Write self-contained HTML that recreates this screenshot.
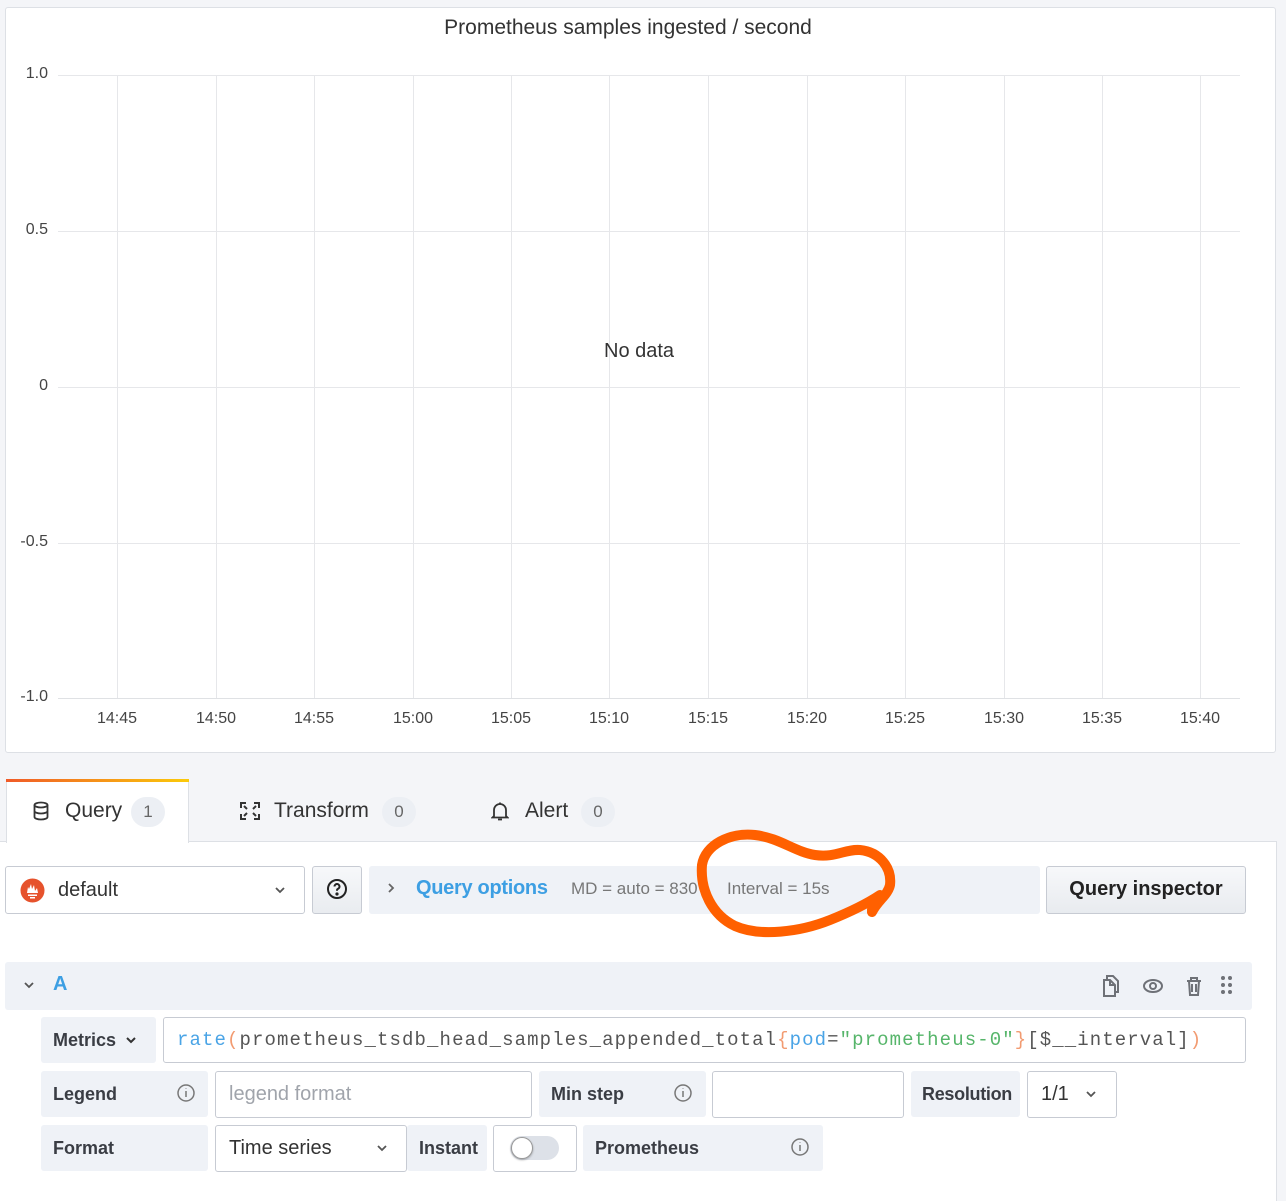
<!DOCTYPE html>
<html><head><meta charset="utf-8"><style>
*{box-sizing:border-box;margin:0;padding:0}
body{width:1286px;height:1192px;background:#f4f5f8;font-family:"Liberation Sans",sans-serif;color:#222;position:relative;overflow:hidden}
.a{position:absolute}
.panel{left:5px;top:7px;width:1271px;height:746px;background:#fff;border:1px solid #dde0e5;border-radius:3px}
.yl{position:absolute;right:1238px;font-size:16px;color:#444;width:60px;text-align:right}
.xl{position:absolute;top:710px;font-size:16px;color:#444;width:60px;text-align:center}
.hg{position:absolute;left:58px;width:1182px;height:1px;background:#e6e7ea}
.vg{position:absolute;top:75px;height:623px;width:1px;background:#e6e7ea}
.lbl{position:absolute;background:#eff2f7;border-radius:3px;font-size:18px;font-weight:bold;color:#3a3d44;padding-left:12px;display:flex;align-items:center}
.inp{position:absolute;background:#fff;border:1px solid #c7cbd3;border-radius:3px;display:flex;align-items:center;padding-left:13px;font-size:20px;color:#333}
.badge{position:absolute;width:34px;height:30px;border-radius:15px;background:#eceff4;color:#666;font-size:17px;text-align:center;line-height:30px}
.tab{position:absolute;font-size:21px;color:#333}
.chev{position:absolute}
</style></head><body>
<div class="a panel"></div>
<div class="a" style="left:0;width:1256px;top:16px;text-align:center;font-size:21px;color:#333">Prometheus samples ingested / second</div>
<div class="hg" style="top:75px"></div><div class="hg" style="top:231px"></div><div class="hg" style="top:387px"></div><div class="hg" style="top:543px"></div><div class="hg" style="top:698px;background:#dfe1e4"></div>
<div class="vg" style="left:117px"></div><div class="vg" style="left:216px"></div><div class="vg" style="left:314px"></div><div class="vg" style="left:413px"></div><div class="vg" style="left:511px"></div><div class="vg" style="left:609px"></div><div class="vg" style="left:708px"></div><div class="vg" style="left:807px"></div><div class="vg" style="left:905px"></div><div class="vg" style="left:1004px"></div><div class="vg" style="left:1102px"></div><div class="vg" style="left:1200px"></div>
<div class="yl" style="top:65px">1.0</div><div class="yl" style="top:221px">0.5</div><div class="yl" style="top:377px">0</div><div class="yl" style="top:533px">-0.5</div><div class="yl" style="top:688px">-1.0</div>
<div class="xl" style="left:87px">14:45</div><div class="xl" style="left:186px">14:50</div><div class="xl" style="left:284px">14:55</div><div class="xl" style="left:383px">15:00</div><div class="xl" style="left:481px">15:05</div><div class="xl" style="left:579px">15:10</div><div class="xl" style="left:678px">15:15</div><div class="xl" style="left:777px">15:20</div><div class="xl" style="left:875px">15:25</div><div class="xl" style="left:974px">15:30</div><div class="xl" style="left:1072px">15:35</div><div class="xl" style="left:1170px">15:40</div>
<div class="a" style="left:604px;top:340px;font-size:20px;color:#333">No data</div>

<div class="a" style="left:0;top:841px;width:1277px;height:360px;background:#fff;border-right:1px solid #dde0e5;border-top:1px solid #dde0e5"></div>
<div class="a" style="left:6px;top:780px;width:183px;height:63px;background:#fff;border:1px solid #dde0e5;border-bottom:none"></div>
<div class="a" style="left:6px;top:779px;width:183px;height:3px;background:linear-gradient(90deg,#f05a28,#fbca0a)"></div>
<svg class="a" style="left:32px;top:801px" width="18" height="20" viewBox="0 0 18 20" fill="none" stroke="#333" stroke-width="1.8"><ellipse cx="9" cy="4" rx="6.5" ry="2.5"/><path d="M2.5 4v12c0 1.4 2.9 2.5 6.5 2.5s6.5-1.1 6.5-2.5V4M2.5 10c0 1.4 2.9 2.5 6.5 2.5s6.5-1.1 6.5-2.5"/></svg>
<div class="tab" style="left:65px;top:799px">Query</div><div class="badge" style="left:131px;top:797px">1</div>
<svg class="a" style="left:239px;top:801px" width="22" height="20" viewBox="0 0 22 20" fill="none" stroke="#333" stroke-width="2"><path d="M2 7V2h5M15 2h5v5M20 13v5h-5M7 18H2v-5M5 5l3 3M17 5l-3 3M17 15l-3-3M5 15l3-3"/></svg>
<div class="tab" style="left:274px;top:799px">Transform</div><div class="badge" style="left:382px;top:797px">0</div>
<svg class="a" style="left:491px;top:801px" width="18" height="20" viewBox="0 0 18 20" fill="none" stroke="#333" stroke-width="1.8"><path d="M3 15V9a6 6 0 0 1 12 0v6l1.5 1.5h-15zM7 18.5h4M9 1.5v1.5"/></svg>
<div class="tab" style="left:525px;top:799px">Alert</div><div class="badge" style="left:581px;top:797px">0</div>

<div class="inp" style="left:5px;top:866px;width:300px;height:48px;padding-left:0">
<svg style="position:absolute;left:14px;top:11px" width="25" height="25" viewBox="0 0 25 25"><circle cx="12.5" cy="12.5" r="12" fill="#e6522c"/><path d="M7 15h11l-1-5-2 3-1-6-2 4-1-5-2 5-1-2zM8 16.5h9v1.5H8zM10 19h5v1.5h-5z" fill="#fff"/></svg>
<span style="position:absolute;left:52px;font-size:20px">default</span></div>
<svg class="chev" style="left:274px;top:886px" width="12" height="8" viewBox="0 0 12 8" fill="none" stroke="#555" stroke-width="1.8"><path d="M2 2l4 4 4-4"/></svg>
<div class="a" style="left:312px;top:866px;width:50px;height:48px;background:linear-gradient(#f7f8fa,#e9ecf0);border:1px solid #c7cbd3;border-radius:3px"></div>
<svg class="a" style="left:326px;top:878px" width="22" height="22" viewBox="0 0 22 22" fill="none" stroke="#222" stroke-width="2"><circle cx="11" cy="11" r="9"/><path d="M8.5 8.5a2.5 2.5 0 1 1 3.5 2.3c-.7.3-1 .8-1 1.5v.5"/><circle cx="11" cy="16" r=".6" fill="#222"/></svg>
<div class="a" style="left:369px;top:866px;width:671px;height:48px;background:#eff2f7;border-radius:3px"></div>
<svg class="chev" style="left:387px;top:882px" width="8" height="12" viewBox="0 0 8 12" fill="none" stroke="#666" stroke-width="1.8"><path d="M2 2l4 4-4 4"/></svg>
<div class="a" style="left:416px;top:877px;font-size:20px;font-weight:bold;color:#3d9fe3;letter-spacing:-0.3px">Query options</div>
<div class="a" style="left:571px;top:879px;font-size:17px;color:#777;width:128px;overflow:hidden;white-space:nowrap">MD = auto = 830</div>
<div class="a" style="left:727px;top:879px;font-size:17px;color:#777">Interval = 15s</div>
<div class="a" style="left:1046px;top:866px;width:200px;height:48px;background:linear-gradient(#f7f8fa,#e8ebef);border:1px solid #c7cbd3;border-radius:3px;font-size:20px;font-weight:bold;color:#222;text-align:center;line-height:45px">Query inspector</div>

<div class="a" style="left:5px;top:962px;width:1247px;height:48px;background:#eff2f7;border-radius:3px"></div>
<svg class="chev" style="left:23px;top:981px" width="12" height="8" viewBox="0 0 12 8" fill="none" stroke="#555" stroke-width="1.8"><path d="M2 2l4 4 4-4"/></svg>
<div class="a" style="left:53px;top:973px;font-size:20px;font-weight:bold;color:#3d9fe3">A</div>
<svg class="a" style="left:1100px;top:974px" width="135" height="24" viewBox="0 0 135 24" fill="none" stroke="#6e7177" stroke-width="2"><path d="M4 6h6l5 5v11H4zM7 6V2h6l5 5v11h-3M10 6v5h5"/><ellipse cx="53" cy="12" rx="9" ry="6"/><circle cx="53" cy="12" r="3"/><path d="M87 7h14M91 7V4h6v3M89 7l1 14h8l1-14M92 10v8M96 10v8"/><g fill="#6e7177" stroke="none"><circle cx="123" cy="4" r="2"/><circle cx="130" cy="4" r="2"/><circle cx="123" cy="11" r="2"/><circle cx="130" cy="11" r="2"/><circle cx="123" cy="18" r="2"/><circle cx="130" cy="18" r="2"/></g></svg>

<div class="lbl" style="left:41px;top:1017px;width:115px;height:46px">Metrics</div>
<svg class="chev" style="left:125px;top:1036px" width="12" height="8" viewBox="0 0 12 8" fill="none" stroke="#333" stroke-width="2"><path d="M2 2l4 4 4-4"/></svg>
<div class="inp" style="left:163px;top:1017px;width:1083px;height:46px;font-family:'Liberation Mono',monospace;font-size:19px;letter-spacing:1.1px;color:#555;white-space:nowrap"><span style="color:#4aa4e6">rate</span><span style="color:#f29b71">(</span>prometheus_tsdb_head_samples_appended_total<span style="color:#f29b71">{</span><span style="color:#4aa4e6">pod</span>=<span style="color:#56b56a">"prometheus-0"</span><span style="color:#f29b71">}</span>[$__interval]<span style="color:#f29b71">)</span></div>

<div class="lbl" style="left:41px;top:1071px;width:167px;height:46px">Legend</div>
<div class="inp" style="left:215px;top:1071px;width:317px;height:47px;color:#a0a4ab">legend format</div>
<div class="lbl" style="left:539px;top:1071px;width:167px;height:46px">Min step</div>
<div class="inp" style="left:712px;top:1071px;width:192px;height:47px"></div>
<div class="lbl" style="left:911px;top:1071px;width:109px;height:46px;padding-left:11px;letter-spacing:-0.3px">Resolution</div>
<div class="inp" style="left:1027px;top:1071px;width:90px;height:47px">1/1</div>
<svg class="chev" style="left:1085px;top:1090px" width="12" height="8" viewBox="0 0 12 8" fill="none" stroke="#555" stroke-width="1.8"><path d="M2 2l4 4 4-4"/></svg>

<div class="lbl" style="left:41px;top:1125px;width:167px;height:46px">Format</div>
<div class="inp" style="left:215px;top:1125px;width:192px;height:47px">Time series</div>
<svg class="chev" style="left:376px;top:1144px" width="12" height="8" viewBox="0 0 12 8" fill="none" stroke="#555" stroke-width="1.8"><path d="M2 2l4 4 4-4"/></svg>
<div class="lbl" style="left:407px;top:1125px;width:80px;height:46px">Instant</div>
<div class="inp" style="left:493px;top:1125px;width:84px;height:47px"></div>
<div class="a" style="left:510px;top:1136px;width:49px;height:24px;border-radius:12px;background:#dde1e8"></div>
<div class="a" style="left:511px;top:1137px;width:22px;height:22px;border-radius:11px;background:#fff;border:1px solid #999;box-shadow:0 1px 2px rgba(0,0,0,.3)"></div>
<div class="lbl" style="left:583px;top:1125px;width:240px;height:46px">Prometheus</div>

<svg class="a" style="left:0;top:0" width="1286" height="1192" fill="none" stroke="#777" stroke-width="1.5">
<g><circle cx="186" cy="1093" r="8"/><path d="M186 1091v6M186 1088v.5"/></g>
<g><circle cx="683" cy="1093" r="8"/><path d="M683 1091v6M683 1088v.5"/></g>
<g><circle cx="800" cy="1147" r="8"/><path d="M800 1145v6M800 1142v.5"/></g>
<path d="M872 912 C878 900 888 895 890 885 C892 868 880 852 860 850 C845 849 835 858 815 855 C795 852 780 838 755 835 C730 832 705 845 702 865 C700 890 712 915 735 926 C760 937 800 932 830 920 C850 912 865 905 880 895 L872 910" stroke="#ff6000" stroke-width="10" stroke-linecap="round" stroke-linejoin="round"/>
</svg>
</body></html>
